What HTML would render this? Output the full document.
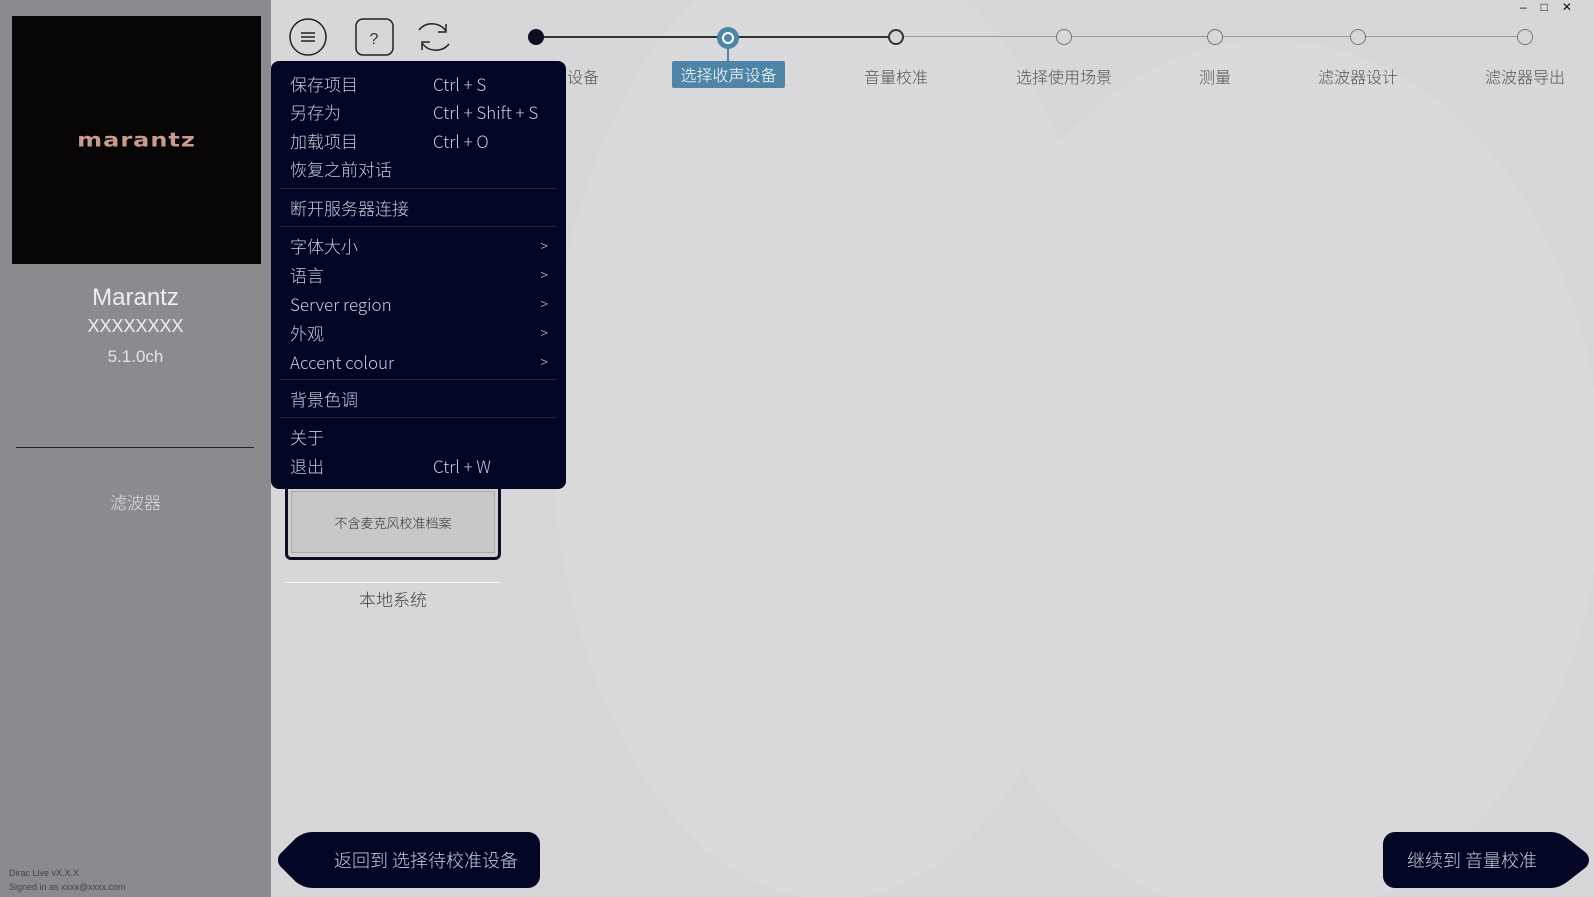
<!DOCTYPE html><html><head><meta charset="utf-8"><style>
*{margin:0;padding:0;box-sizing:border-box}
body{width:1594px;height:897px;overflow:hidden;background:#d7d6d9;font-family:"Liberation Sans","Noto Sans CJK SC",sans-serif;position:relative}
.a{position:absolute}
#side{left:0;top:0;width:271px;height:897px;background:#8c8a8e}
.menu{left:271px;top:61px;width:295px;height:428px;background:#020624;border-radius:8px;color:#c9cad6;font-size:17px;font-family:"Noto Sans CJK SC","Liberation Sans",sans-serif;font-weight:300}
.mi,.sc,.ar{position:absolute;white-space:nowrap;line-height:22px;height:22px}
.mi{left:19px}
.sc{left:162px}
.ar{right:18px;font-size:14px}
.sep{position:absolute;left:9px;right:9px;height:1px;background:#1c2440}
.lab{top:64px;font-size:16px;color:#555;white-space:nowrap;transform:translateX(-50%);font-family:"Noto Sans CJK SC",sans-serif;font-weight:300}
.dot{width:16px;height:16px;border:2px solid #333;border-radius:50%;background:#d7d6d9;top:29px;transform:translateX(-50%)}
</style></head><body>
<svg class="a" style="left:271px;top:0" width="1323" height="897"><ellipse cx="560" cy="420" rx="280" ry="480" fill="#dad9dc"/><ellipse cx="1000" cy="480" rx="330" ry="440" fill="#dad9dc"/></svg>
<div id="side" class="a"></div>
<div class="a" style="left:12px;top:16px;width:249px;height:248px;background:#080506"></div>
<div class="a" style="left:12px;top:126px;width:249px;text-align:center;font-family:'DejaVu Sans',sans-serif;font-weight:bold;font-size:24px;color:#c99b8e;letter-spacing:1px;transform:scaleY(0.8)">marantz</div>
<div class="a" style="left:0;top:284px;width:271px;text-align:center;color:#eee;font-size:24px">Marantz</div>
<div class="a" style="left:0;top:316px;width:271px;text-align:center;color:#eee;font-size:18px">XXXXXXXX</div>
<div class="a" style="left:0;top:347px;width:271px;text-align:center;color:#e4e4e4;font-size:17px">5.1.0ch</div>
<div class="a" style="left:16px;top:447px;width:238px;height:1px;background:#222"></div>
<div class="a" style="left:0;top:489px;width:271px;text-align:center;color:#ddd;font-size:17px;font-family:'Noto Sans CJK SC',sans-serif;font-weight:300">滤波器</div>
<div class="a" style="left:9px;top:866px;color:#444;font-size:9px;line-height:14px">Dirac Live vX.X.X<br>Signed in as xxxx@xxxx.com</div>
<svg class="a" style="left:288px;top:16px" width="180" height="42" fill="none" stroke="#222" stroke-width="1.5"><circle cx="20" cy="21" r="18"/><path d="M13 17h14M13 21h14M13 25h14"/><rect x="68" y="3" width="37" height="36" rx="7"/><text x="86" y="28" font-size="16" fill="#333" stroke="none" text-anchor="middle" font-family="Liberation Sans">?</text><path d="M131 14a17 17 0 0 1 27 1M158 8v8h-8M161 28a17 17 0 0 1-27-1M134 34v-8h8"/></svg>
<div class="a" style="left:536px;top:36px;width:360px;height:2px;background:#333"></div>
<div class="a" style="left:896px;top:36px;width:629px;height:1px;background:#999"></div>
<div class="a" style="left:536px;top:29px;width:16px;height:16px;border-radius:50%;background:#0b0e20;transform:translateX(-50%)"></div>
<div class="a dot" style="left:896px"></div><div class="a dot" style="left:1064px;border-color:#777;border-width:1px"></div><div class="a dot" style="left:1215px;border-color:#777;border-width:1px"></div><div class="a dot" style="left:1358px;border-color:#777;border-width:1px"></div><div class="a dot" style="left:1525px;border-color:#777;border-width:1px"></div>
<div class="a" style="left:672px;top:61px;width:113px;height:27px;background:#4e84a6;border-radius:2px;color:#fff;font-size:16px;text-align:center;line-height:27px;font-family:'Noto Sans CJK SC',sans-serif;font-weight:300">选择收声设备</div>
<div class="a" style="left:727px;top:46px;width:2px;height:15px;background:#4e84a6"></div>
<div class="a" style="left:728px;top:27px;width:22px;height:22px;border-radius:50%;background:#4e84a6;transform:translateX(-50%)"><div style="margin:5px;width:12px;height:12px;border-radius:50%;border:2px solid #fff"></div></div>
<div class="a lab" style="left:583px">设备</div>
<div class="a lab" style="left:896px">音量校准</div><div class="a lab" style="left:1064px">选择使用场景</div><div class="a lab" style="left:1215px">测量</div><div class="a lab" style="left:1358px">滤波器设计</div><div class="a lab" style="left:1525px">滤波器导出</div>
<div class="a" style="left:1520px;top:0;font-size:12px;color:#111;letter-spacing:14px">–□✕</div>
<div class="a" style="left:285px;top:488px;width:216px;height:72px;border:3px solid #0b0e20;border-top:none;border-radius:0 0 6px 6px;background:#cfced1"><div style="margin:3px;height:62px;background:#c8c7ca;border:1px solid #aaa;text-align:center;line-height:62px;font-size:13px;color:#333;font-family:'Noto Sans CJK SC',sans-serif;font-weight:300">不含麦克风校准档案</div></div>
<div class="a" style="left:285px;top:582px;width:216px;height:1px;background:#f4f4f4"></div>
<div class="a" style="left:285px;top:586px;width:216px;text-align:center;font-size:17px;color:#444;font-family:'Noto Sans CJK SC',sans-serif;font-weight:300">本地系统</div>
<div class="menu a">
<div class="mi" style="top:12px">保存项目</div><div class="sc" style="top:12px">Ctrl + S</div>
<div class="mi" style="top:40px">另存为</div><div class="sc" style="top:40px">Ctrl + Shift + S</div>
<div class="mi" style="top:69px">加载项目</div><div class="sc" style="top:69px">Ctrl + O</div>
<div class="mi" style="top:97px">恢复之前对话</div>
<div class="sep" style="top:127px"></div>
<div class="mi" style="top:136px">断开服务器连接</div>
<div class="sep" style="top:165px"></div>
<div class="mi" style="top:174px">字体大小</div><div class="ar" style="top:174px">&gt;</div>
<div class="mi" style="top:203px">语言</div><div class="ar" style="top:203px">&gt;</div>
<div class="mi" style="top:232px">Server region</div><div class="ar" style="top:232px">&gt;</div>
<div class="mi" style="top:261px">外观</div><div class="ar" style="top:261px">&gt;</div>
<div class="mi" style="top:290px">Accent colour</div><div class="ar" style="top:290px">&gt;</div>
<div class="sep" style="top:318px"></div>
<div class="mi" style="top:327px">背景色调</div>
<div class="sep" style="top:356px"></div>
<div class="mi" style="top:365px">关于</div>
<div class="mi" style="top:394px">退出</div><div class="sc" style="top:394px">Ctrl + W</div>
</div>
<svg class="a" style="left:278px;top:832px" width="262" height="56"><path d="M34 0H250a12 12 0 0 1 12 12v32a12 12 0 0 1-12 12H34Q26 56 18 50L4 36a10 10 0 0 1 0-16L18 6Q26 0 34 0Z" fill="#020624"/><text x="148" y="35" text-anchor="middle" font-size="18" fill="#c9cad6" font-family="Noto Sans CJK SC,sans-serif" font-weight="300">返回到 选择待校准设备</text></svg>
<svg class="a" style="left:1383px;top:832px" width="208" height="56"><path d="M12 0H168Q176 0 184 6L202 20a10 10 0 0 1 0 16L184 50Q176 56 168 56H12A12 12 0 0 1 0 44V12A12 12 0 0 1 12 0Z" fill="#020624"/><text x="89" y="35" text-anchor="middle" font-size="18" fill="#c9cad6" font-family="Noto Sans CJK SC,sans-serif" font-weight="300">继续到 音量校准</text></svg>
</body></html>
